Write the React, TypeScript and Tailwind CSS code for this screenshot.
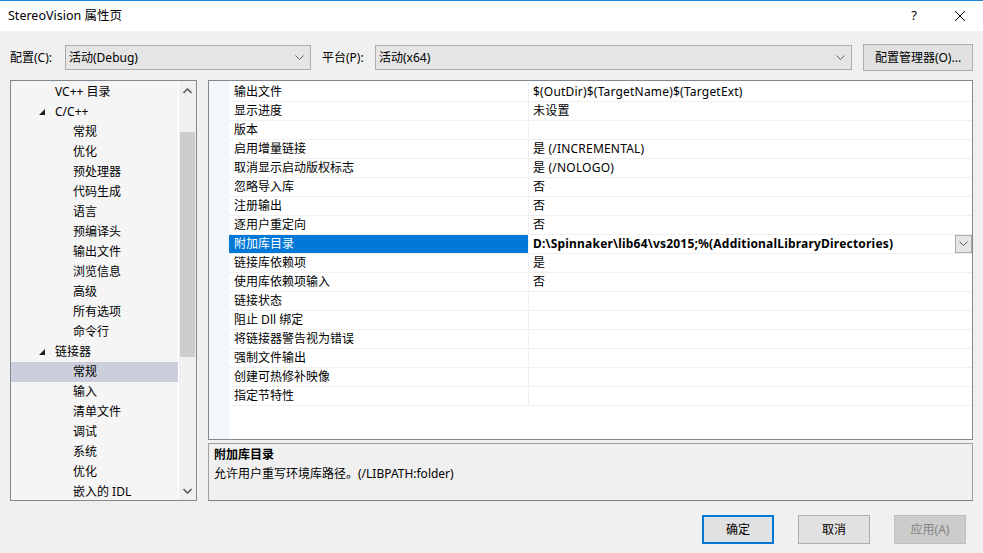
import React from 'react';

type TreeItem = { label: string; level: 0 | 1 | 2; open?: boolean; selected?: boolean };

const TREE: TreeItem[] = [
  { label: 'VC++ 目录', level: 1 },
  { label: 'C/C++', level: 1, open: true },
  { label: '常规', level: 2 },
  { label: '优化', level: 2 },
  { label: '预处理器', level: 2 },
  { label: '代码生成', level: 2 },
  { label: '语言', level: 2 },
  { label: '预编译头', level: 2 },
  { label: '输出文件', level: 2 },
  { label: '浏览信息', level: 2 },
  { label: '高级', level: 2 },
  { label: '所有选项', level: 2 },
  { label: '命令行', level: 2 },
  { label: '链接器', level: 1, open: true },
  { label: '常规', level: 2, selected: true },
  { label: '输入', level: 2 },
  { label: '清单文件', level: 2 },
  { label: '调试', level: 2 },
  { label: '系统', level: 2 },
  { label: '优化', level: 2 },
  { label: '嵌入的 IDL', level: 2 },
];

const PROPS: { name: string; value: string; selected?: boolean }[] = [
  { name: '输出文件', value: '$(OutDir)$(TargetName)$(TargetExt)' },
  { name: '显示进度', value: '未设置' },
  { name: '版本', value: '' },
  { name: '启用增量链接', value: '是 (/INCREMENTAL)' },
  { name: '取消显示启动版权标志', value: '是 (/NOLOGO)' },
  { name: '忽略导入库', value: '否' },
  { name: '注册输出', value: '否' },
  { name: '逐用户重定向', value: '否' },
  { name: '附加库目录', value: 'D:\\Spinnaker\\lib64\\vs2015;%(AdditionalLibraryDirectories)', selected: true },
  { name: '链接库依赖项', value: '是' },
  { name: '使用库依赖项输入', value: '否' },
  { name: '链接状态', value: '' },
  { name: '阻止 Dll 绑定', value: '' },
  { name: '将链接器警告视为错误', value: '' },
  { name: '强制文件输出', value: '' },
  { name: '创建可热修补映像', value: '' },
  { name: '指定节特性', value: '' },
];

function Chevron({ className = '' }: { className?: string }) {
  return (
    <svg width="9" height="6" viewBox="0 0 9 6" className={className}>
      <path d="M0.5 0.5 L4.5 4.5 L8.5 0.5" fill="none" stroke="#606060" strokeWidth="1" />
    </svg>
  );
}

function Combo({ value, width }: { value: string; width: string }) {
  return (
    <div className={`${width} h-[25px] bg-[#e5e5e5] border border-[#acacac] flex items-center pl-[3px] pr-[6px]`}>
      <span className="flex-1 text-[#000]">{value}</span>
      <Chevron />
    </div>
  );
}

export default function App() {
  return (
    <div
      className="w-[983px] h-[553px] bg-[#f0f0f0] flex flex-col border-t border-[#1883d7] text-[12px] text-black overflow-hidden"
      style={{ fontFamily: '"Noto Sans", "Noto Sans CJK SC", sans-serif' }}
    >
      {/* Title bar */}
      <div className="h-[30px] bg-white flex items-center pl-[8px] shrink-0">
        <span className="flex-1 text-[12.5px]">StereoVision 属性页</span>
        <span className="w-[20px] text-center text-[13px] mr-[30px]">?</span>
        <svg width="12" height="12" viewBox="0 0 12 12" className="mr-[17px]">
          <path d="M1 1 L11 11 M11 1 L1 11" stroke="#000" strokeWidth="1" />
        </svg>
      </div>

      {/* Configuration row */}
      <div className="flex items-center h-[27px] mt-[13px] pl-[10px] shrink-0">
        <span className="w-[55px]">配置(C):</span>
        <Combo value="活动(Debug)" width="w-[246px]" />
        <span className="ml-[11px] w-[53px]">平台(P):</span>
        <Combo value="活动(x64)" width="w-[477px]" />
        <button className="ml-[11px] w-[110px] h-[27px] bg-[#e1e1e1] border border-[#adadad] text-[12px]">
          配置管理器(O)...
        </button>
      </div>

      {/* Main area */}
      <div className="flex mt-[9px] pl-[10px] shrink-0">
        {/* Tree */}
        <div className="w-[187px] h-[421px] border border-[#828790] bg-[#f5f5f5] flex">
          <div className="flex-1 flex flex-col pt-[1px]">
            {TREE.map((t, i) => (
              <div
                key={i}
                className={`h-[20px] flex items-center shrink-0 ${t.selected ? 'bg-[#cccedb]' : ''}`}
              >
                {t.level === 1 ? (
                  <>
                    <span className="w-[34px] flex justify-end">
                      {t.open && (
                        <svg width="6" height="6" viewBox="0 0 6 6">
                          <path d="M6 0 L6 6 L0 6 Z" fill="#1e1e1e" />
                        </svg>
                      )}
                    </span>
                    <span className="ml-[10px]">{t.label}</span>
                  </>
                ) : (
                  <span className="ml-[62px]">{t.label}</span>
                )}
              </div>
            ))}
          </div>
          <div className="w-[18px] border-l border-white bg-[#f0f0f0] flex flex-col items-center">
            <svg width="9" height="6" viewBox="0 0 9 6" className="mt-[7px]">
              <path d="M0.5 5 L4.5 1 L8.5 5" fill="none" stroke="#606060" strokeWidth="1.6" />
            </svg>
            <div className="w-[15px] h-[225px] bg-[#cdcdcd] mt-[38px]" />
            <div className="flex-1" />
            <svg width="9" height="6" viewBox="0 0 9 6" className="mb-[6px]">
              <path d="M0.5 1 L4.5 5 L8.5 1" fill="none" stroke="#606060" strokeWidth="1.6" />
            </svg>
          </div>
        </div>

        {/* Right column */}
        <div className="ml-[11px] w-[765px] flex flex-col">
          {/* Property grid */}
          <div className="h-[360px] border border-[#828790] bg-white flex">
            <div className="w-[20px] bg-[#f3f6fb]" />
            <div className="flex-1 flex flex-col pt-[2px]">
              {PROPS.map((p, i) => (
                <div key={i} className="h-[19px] flex border-b border-[#f0f0f0] shrink-0">
                  <div
                    className={`w-[300px] pl-[5px] flex items-center border-r border-[#f0f0f0] ${
                      p.selected ? 'bg-[#0078d7] text-white' : ''
                    }`}
                  >
                    {p.name}
                  </div>
                  <div className={`flex-1 pl-[4px] flex items-center ${p.selected ? 'font-bold' : ''}`}>
                    <span className="flex-1 whitespace-nowrap tracking-[0.2px]">{p.value}</span>
                    {p.selected && (
                      <div className="w-[17px] h-[18px] bg-[#e5e5e5] border border-[#acacac] flex items-center justify-center">
                        <Chevron />
                      </div>
                    )}
                  </div>
                </div>
              ))}
            </div>
          </div>

          {/* Description */}
          <div className="h-[58px] mt-[3px] border border-[#a0a0a0] border-b-[#808080] bg-[#f0f0f0] pl-[5px] pt-[1px]">
            <div className="font-bold leading-[19px]">附加库目录</div>
            <div className="leading-[19px]">允许用户重写环境库路径。(/LIBPATH:folder)</div>
          </div>
        </div>
      </div>

      {/* Buttons */}
      <div className="flex justify-end mt-[14px] pr-[17px] gap-[24px] shrink-0">
        <button className="w-[72px] h-[29px] bg-[#e1e1e1] border-2 border-[#0078d7]">确定</button>
        <button className="w-[72px] h-[29px] bg-[#e1e1e1] border border-[#adadad]">取消</button>
        <button className="w-[72px] h-[29px] bg-[#cccccc] border border-[#bfbfbf] text-[#838383]">
          应用(A)
        </button>
      </div>
    </div>
  );
}
